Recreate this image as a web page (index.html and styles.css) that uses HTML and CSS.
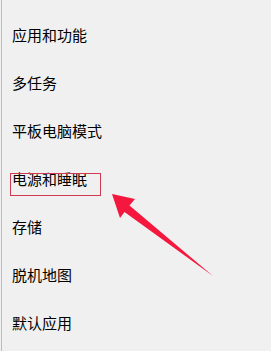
FILE: index.html
```html
<!DOCTYPE html>
<html lang="zh-CN">
<head>
<meta charset="utf-8">
<link rel="stylesheet" href="styles.css">
</head>
<body>
<div class="panel">
  <ul class="menu">
    <li class="item">应用和功能</li>
    <li class="item">多任务</li>
    <li class="item">平板电脑模式</li>
    <li class="item marked">电源和睡眠<span class="mark-box"></span></li>
    <li class="item">存储</li>
    <li class="item">脱机地图</li>
    <li class="item">默认应用</li>
  </ul>
  <svg class="arrow" width="271" height="351" viewBox="0 0 271 351">
    <polygon points="112,194 135,199 129.5,205.5 213,276 124.5,212 120,218" fill="#f4173e"/>
  </svg>
</div>
</body>
</html>
```

FILE: styles.css
```css
html, body {
  margin: 0;
  padding: 0;
  background: #f0f0f0;
}
.panel {
  position: relative;
  width: 270px;
  height: 351px;
  margin-left: 1px;
  border-left: 1px solid #bcbcbc;
  box-sizing: border-box;
  overflow: hidden;
}
.menu {
  list-style: none;
  margin: 0;
  padding: 11px 0 0 10px;
}
.item {
  height: 48px;
  line-height: 48px;
  font-family: "Microsoft YaHei", "Noto Sans CJK SC", sans-serif;
  font-size: 15px;
  color: #000;
}
.marked {
  position: relative;
}
.mark-box {
  position: absolute;
  left: -2px;
  top: 18px;
  width: 91px;
  height: 23px;
  border: 1px solid #cf3a52;
  box-sizing: border-box;
}
.arrow {
  position: absolute;
  left: -2px;
  top: 0;
}
```
